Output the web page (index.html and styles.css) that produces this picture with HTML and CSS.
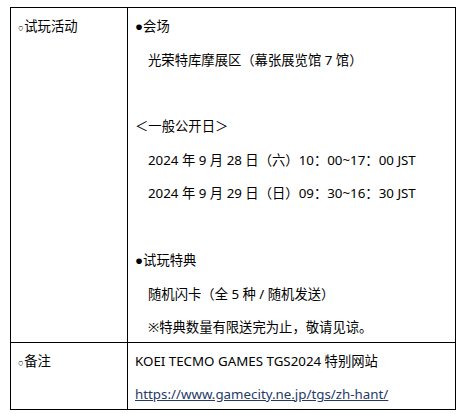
FILE: index.html
```html
<!DOCTYPE html>
<html lang="zh-CN">
<head>
<meta charset="utf-8">
<link rel="stylesheet" href="styles.css">
</head>
<body>
<table class="info">
  <colgroup><col class="c1"><col class="c2"></colgroup>
  <tr>
    <td class="label"><span class="wb">○</span>试玩活动</td>
    <td class="content">
      <p><span class="bl">●</span>会场</p>
      <p class="indent">光荣特库摩展区（幕张展览馆 7 馆）</p>
      <p class="empty">&nbsp;</p>
      <p>＜一般公开日＞</p>
      <p class="indent">2024 年 9 月 28 日（六）10：00~17：00 JST</p>
      <p class="indent">2024 年 9 月 29 日（日）09：30~16：30 JST</p>
      <p class="empty">&nbsp;</p>
      <p><span class="bl">●</span>试玩特典</p>
      <p class="indent">随机闪卡（全 5 种 / 随机发送）</p>
      <p class="indent">※特典数量有限送完为止，敬请见谅。</p>
    </td>
  </tr>
  <tr>
    <td class="label"><span class="wb">○</span>备注</td>
    <td class="content">
      <p>KOEI TECMO GAMES TGS2024 特别网站</p>
      <p><a class="link" href="#">https://www.gamecity.ne.jp/tgs/zh-hant/</a></p>
    </td>
  </tr>
</table>
</body>
</html>
```
FILE: styles.css
```css
html, body {
  margin: 0;
  background: #fff;
}
body {
  padding: 7px 0 0 10px;
  font-family: "Noto Sans", "Noto Sans CJK SC", sans-serif;
  font-size: 13.33px;
  color: #000;
}
.info {
  border-collapse: collapse;
  table-layout: fixed;
  width: 445px;
}
.c1 { width: 117px; }
.c2 { width: 328px; }
.info td {
  border: 1px solid #000;
  vertical-align: top;
  padding: 7.5px 7px 5px 7px;
}
.label {
  line-height: 20px;
  padding-left: 6px;
}
.content p {
  margin: 0 0 13.3px;
  line-height: 20px;
  white-space: nowrap;
}
.content p:last-child {
  margin-bottom: 0;
}
.indent {
  padding-left: 13px;
}
.bl {
  font-family: "Liberation Sans", sans-serif;
}
.wb {
  font-family: "Liberation Sans", sans-serif;
  font-size: 9.5px;
  margin-right: 0.5px;
}
.link {
  color: #253a6a;
  text-decoration: underline;
}
```
